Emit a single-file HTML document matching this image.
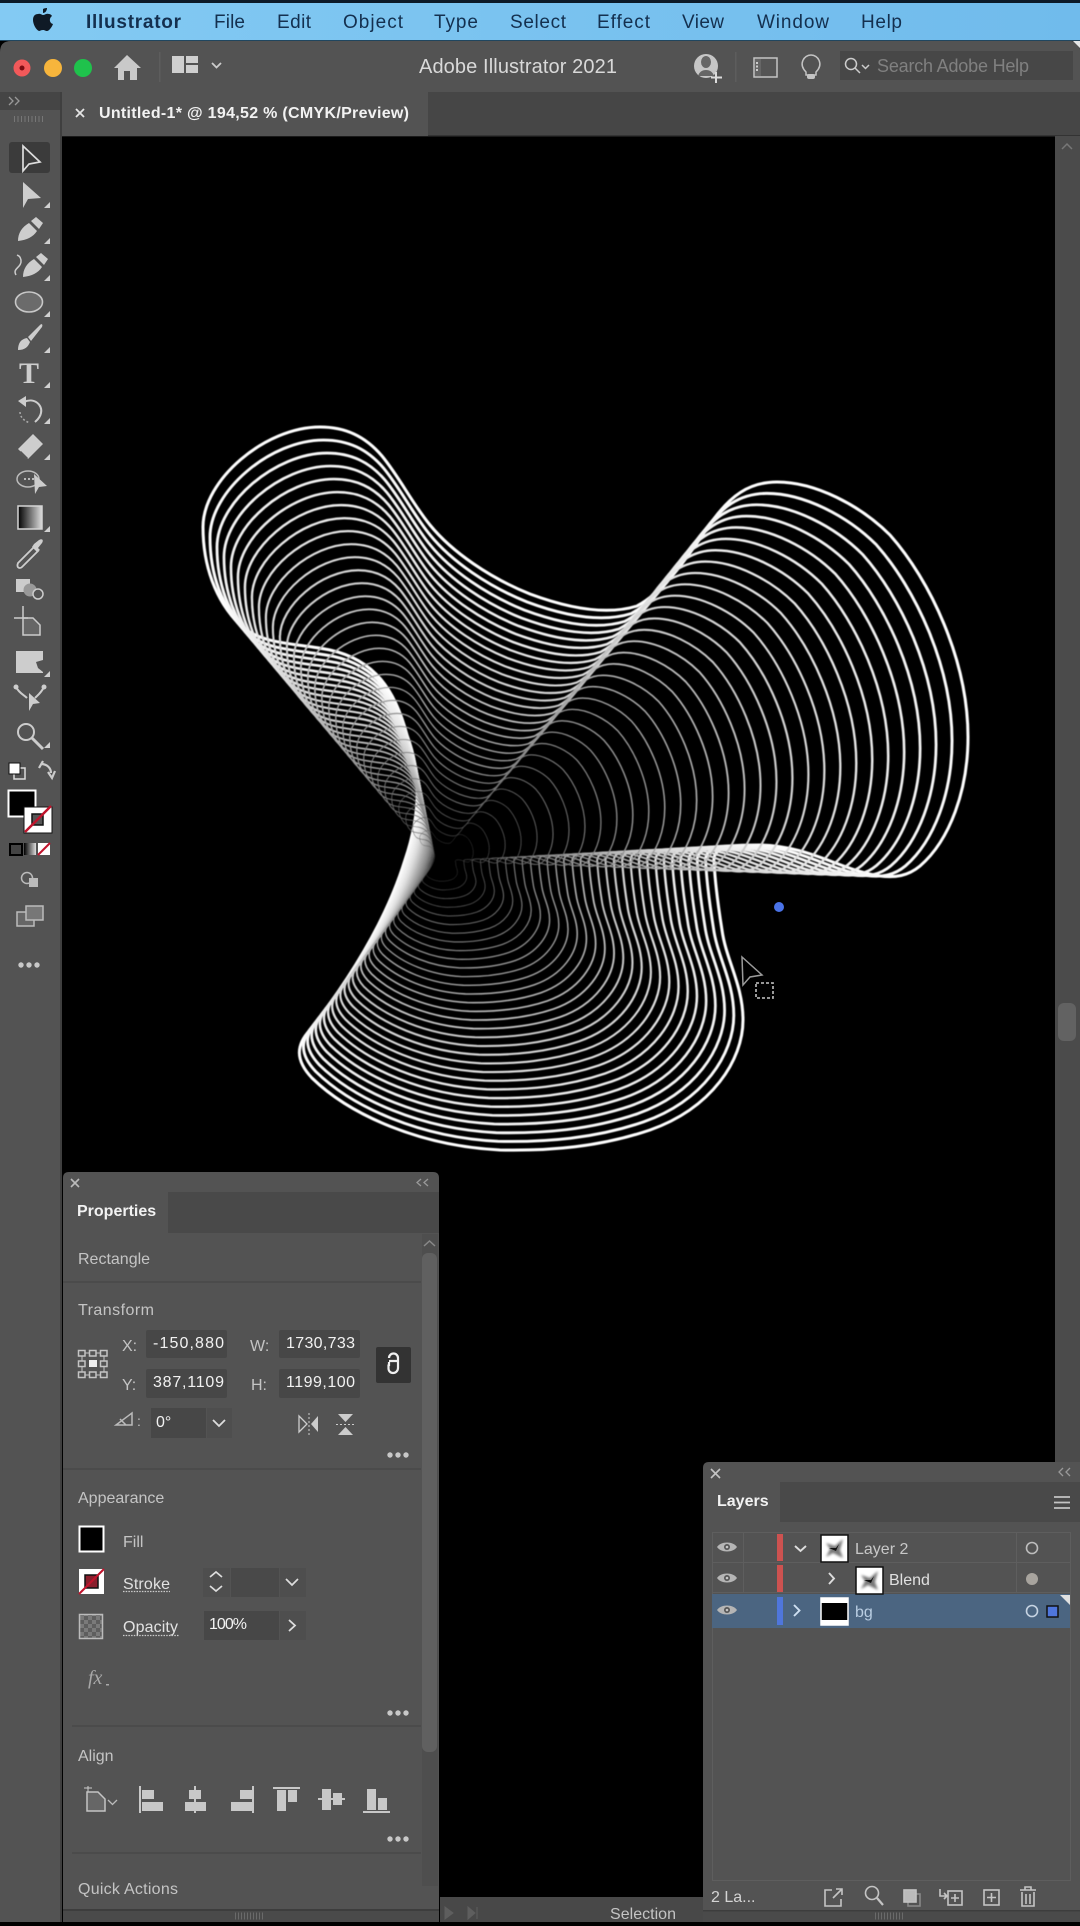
<!DOCTYPE html>
<html><head><meta charset="utf-8"><title>Adobe Illustrator 2021</title>
<style>
html,body{margin:0;padding:0;background:#000;width:1080px;height:1926px;overflow:hidden}
svg{display:block;font-family:"Liberation Sans",sans-serif}
.w{fill:#f2f2f2}
.g{fill:#c4c4c4}
.b{font-weight:bold}
</style></head><body>
<svg width="1080" height="1926" viewBox="0 0 1080 1926" xmlns="http://www.w3.org/2000/svg">
<defs>
<linearGradient id="menu" x1="0" x2="1" y1="0" y2="0"><stop offset="0" stop-color="#83caf3"/><stop offset="1" stop-color="#70bbec"/></linearGradient>
<linearGradient id="gr" x1="0" x2="1" y1="0" y2="0"><stop offset="0" stop-color="#000"/><stop offset="1" stop-color="#ddd"/></linearGradient>
<filter id="soft" x="-5%" y="-5%" width="110%" height="110%"><feGaussianBlur stdDeviation="0.4"/></filter>
<filter id="bl" x="-20%" y="-20%" width="140%" height="140%"><feGaussianBlur stdDeviation="1.3"/></filter>
<pattern id="chk" width="8" height="8" patternUnits="userSpaceOnUse"><rect width="8" height="8" fill="#5e5e5e"/><rect width="4" height="4" fill="#7a7a7a"/><rect x="4" y="4" width="4" height="4" fill="#7a7a7a"/></pattern>
<path id="tri" d="M0 0H-6L0-6Z" fill="#d0d0d0"/>
<g id="dots" fill="#c8c8c8"><circle cx="0" cy="0" r="2.700"/><circle cx="8" cy="0" r="2.700"/><circle cx="16" cy="0" r="2.700"/></g>
<g id="eye"><path d="M-10 0C-6-6 6-6 10 0C6 6-6 6-10 0Z" fill="#b5b5b5"/><circle r="3" fill="#555"/><circle r="1.300" fill="#c5c5c5"/></g>
<g id="thumb"><rect x="0" y="0" width="27" height="27" fill="#fff" stroke="#111" stroke-width="1.500"/><path d="M5 8L14 11L22 4L19 15L22 23L12 18L5 22L9 14Z" fill="#777" filter="url(#bl)"/><path d="M8 13L15 13L18 9L15 16Z" fill="#111"/></g>
<path id="b" transform="translate(-436 -861)" fill="none" stroke-linejoin="round" d="M320 427C345 427 365 436 382 456C400 478 412 503 430 525C452 552 490 578 530 594C565 607 605 616 637 606C668 590 695 545 713 520C730 497 748 482 777 482C815 482 860 505 890 535C930 580 968 660 968 737C968 790 950 840 920 866C908 876 895 878 880 876C840 870 810 846 760 845C735 845 712 845 714 862C715 880 718 905 722 930C726 960 743 985 743 1020C743 1060 712 1108 650 1130C600 1147 550 1151 500 1150C420 1146 350 1115 312 1078C295 1060 296 1045 310 1030C345 985 385 925 405 860C422 810 420 770 407 735C395 690 375 660 330 650C295 643 262 645 240 625C215 600 203 565 203 527C203 480 265 427 320 427Z"/>
</defs>

<!-- base -->
<rect width="1080" height="1926" fill="#000"/>
<rect width="1080" height="3" fill="#0c1a28"/>
<rect y="3" width="1080" height="37" fill="url(#menu)"/>
<rect y="40" width="1080" height="1" fill="#20465f"/>

<!-- menu -->
<path d="M43 9C45 8 47 8 47 8C47 11 45 13 43 13C43 11 43 10 43 9ZM38 14C40 13 42 15 43 15C45 15 46 13 49 14C51 14 52 16 52 16C49 18 49 23 53 24C52 27 49 31 47 31C45 31 45 30 43 30C41 30 40 31 39 31C36 30 33 24 33 20C33 16 35 14 38 14Z" fill="#0f1a26"/>
<g fill="#14304f" font-size="19">
<text x="86" y="28" class="b" textLength="95">Illustrator</text>
<text x="214" y="28" textLength="31">File</text>
<text x="277" y="28" textLength="34">Edit</text>
<text x="343" y="28" textLength="60">Object</text>
<text x="434" y="28" textLength="44">Type</text>
<text x="510" y="28" textLength="56">Select</text>
<text x="597" y="28" textLength="53">Effect</text>
<text x="682" y="28" textLength="42">View</text>
<text x="757" y="28" textLength="72">Window</text>
<text x="861" y="28" textLength="41">Help</text>
</g>

<!-- title bar -->
<path d="M0 52Q0 41 11 41H1070Q1080 41 1080 50V92H0Z" fill="#535353"/>
<circle cx="22" cy="68" r="8.500" fill="#f2595a"/><circle cx="22" cy="68" r="2.500" fill="#7a0c12"/>
<circle cx="53" cy="68" r="9" fill="#f7b53c"/>
<circle cx="83" cy="68" r="9" fill="#1fc24c"/>
<path d="M114 68L127 55L141 68H137V80H130V71H124V80H118V68Z" fill="#c9c9c9"/>
<rect x="159" y="52" width="1.500" height="30" fill="#5d5d5d"/>
<path d="M172 56h12v17h-12zM186 56h12v7h-12zM186 65h12v8h-12z" fill="#cfcfcf"/>
<path d="M212 63l4.500 4.500 4.500-4.500" fill="none" stroke="#ccc" stroke-width="1.800"/>
<text x="419" y="73" font-size="20" fill="#d9d9d9" textLength="198">Adobe Illustrator 2021</text>
<circle cx="706" cy="66" r="12" fill="#c6c6c6"/><path d="M701 62a5 6 0 0 1 10 0a5 6 0 0 1-10 0ZM698 76q2-6 8-6t8 6z" fill="#666"/>
<path d="M716 72v11M711 77.500h11" stroke="#ddd" stroke-width="2"/>
<rect x="735" y="52" width="1.500" height="30" fill="#5d5d5d"/>
<rect x="754" y="58" width="23" height="19" fill="#555" stroke="#c4c4c4" stroke-width="1.500"/><rect x="755" y="59" width="6" height="17" fill="#666"/><path d="M757 62v10" stroke="#ccc" stroke-width="2" stroke-dasharray="2 1.500"/>
<path d="M806 72C798 64 804 55 811 55C818 55 824 64 816 72V75H806Z" fill="none" stroke="#c4c4c4" stroke-width="1.500"/><rect x="807" y="74" width="8" height="5" rx="2" fill="#c4c4c4"/>
<rect x="840" y="51" width="233" height="29" fill="#474747"/>
<circle cx="851" cy="64" r="5.500" fill="none" stroke="#ccc" stroke-width="1.500"/><path d="M855 68l5 5M862 65l3.500 3.500 3.500-3.500" fill="none" stroke="#ccc" stroke-width="1.500"/>
<text x="877" y="72" font-size="18" fill="#808080" textLength="152">Search Adobe Help</text>
<path d="M1080 41l-7 0l7 7z" fill="#e6e6e6"/>

<!-- tab row -->
<rect y="92" width="1080" height="44" fill="#464646"/>
<rect y="135" x="62" width="1018" height="1.500" fill="#333"/>
<rect x="62" y="92" width="366" height="44" fill="#535353"/>
<path d="M76 109l8 8M84 109l-8 8" stroke="#e5e5e5" stroke-width="1.800"/>
<text x="99" y="118" class="b w" font-size="16" textLength="310">Untitled-1* @ 194,52 % (CMYK/Preview)</text>

<!-- right scrollbar -->
<rect x="1055" y="136" width="25" height="1326" fill="#4b4b4b"/>
<path d="M1062 149l5-5 5 5" fill="none" stroke="#777" stroke-width="1.500"/>
<rect x="1058" y="1003" width="18" height="38" rx="6" fill="#626262"/>

<!-- artwork -->
<g transform="translate(436 861)" filter="url(#soft)">
<g stroke-width="3.000">
<use href="#b" stroke="#fff" transform="scale(1)"/>
<use href="#b" stroke="#fcfcfc" transform="scale(.97)"/>
<use href="#b" stroke="#f8f8f8" transform="scale(.94)"/>
<use href="#b" stroke="#f4f4f4" transform="scale(.91)"/>
<use href="#b" stroke="#f1f1f1" transform="scale(.88)"/>
<use href="#b" stroke="#eee" transform="scale(.85)"/>
<use href="#b" stroke="#ebebeb" transform="scale(.82)"/>
<use href="#b" stroke="#e7e7e7" transform="scale(.79)"/>
<use href="#b" stroke="#e3e3e3" transform="scale(.76)"/>
<use href="#b" stroke="#dfdfdf" transform="scale(.73)"/>
<use href="#b" stroke="#dbdbdb" transform="scale(.70)"/>
</g>
<g stroke-width="3.300">
<use href="#b" stroke="#d5d5d5" transform="scale(.67)"/>
<use href="#b" stroke="#cfcfcf" transform="scale(.64)"/>
<use href="#b" stroke="#c9c9c9" transform="scale(.61)"/>
<use href="#b" stroke="#c3c3c3" transform="scale(.58)"/>
<use href="#b" stroke="#bcbcbc" transform="scale(.55)"/>
<use href="#b" stroke="#b5b5b5" transform="scale(.52)"/>
<use href="#b" stroke="#aeaeae" transform="scale(.49)"/>
<use href="#b" stroke="#a8a8a8" transform="scale(.46)"/>
<use href="#b" stroke="#a2a2a2" transform="scale(.43)"/>
<use href="#b" stroke="#9c9c9c" transform="scale(.40)"/>
</g>
<g stroke-width="3.800">
<use href="#b" stroke="#959595" transform="scale(.37)"/>
<use href="#b" stroke="#8e8e8e" transform="scale(.34)"/>
<use href="#b" stroke="#878787" transform="scale(.31)"/>
<use href="#b" stroke="#808080" transform="scale(.28)"/>
<use href="#b" stroke="#7a7a7a" transform="scale(.25)"/>
</g>
<g stroke-width="4.500">
<use href="#b" stroke="#727272" transform="scale(.22)"/>
<use href="#b" stroke="#6a6a6a" transform="scale(.19)"/>
<use href="#b" stroke="#626262" transform="scale(.16)"/>
</g>
<g stroke-width="6">
<use href="#b" stroke="#5a5a5a" transform="scale(.13)"/>
<use href="#b" stroke="#505050" transform="scale(.10)"/>
<use href="#b" stroke="#464646" transform="scale(.07)"/>
</g>
</g>
<circle cx="779" cy="907" r="5" fill="#4a73e8"/>
<path d="M742 957L762 975L750 977L743 985Z" fill="#000" stroke="#9a9a9a" stroke-width="1.500"/>
<rect x="756" y="983" width="17" height="15" fill="#000" stroke="#aaa" stroke-width="1.800" stroke-dasharray="3 2"/>

<!-- left toolbar -->
<rect y="92" width="62" height="1834" fill="#535353"/>
<rect y="92" width="60" height="18" fill="#454545"/>
<rect x="60" y="92" width="2" height="1834" fill="#3f3f3f"/>
<path d="M9 97l4 4-4 4M15 97l4 4-4 4" fill="none" stroke="#999" stroke-width="1.300"/>
<line x1="14" x2="43" y1="119" y2="119" stroke="#777" stroke-width="6" stroke-dasharray="1 2.500"/>
<rect x="9" y="142" width="41" height="31" rx="3" fill="#3b3b3b"/>
<path d="M23 146L40 162L29 164L23 171Z" fill="none" stroke="#ddd" stroke-width="1.700"/>
<g fill="#cdcdcd">
<path d="M23 182L41 198L28 199L23 208Z"/>
<path d="M18 241C18 233 22 227 29 223L37 231C33 237 27 240 18 241ZM31 221L36 217L43 223L39 229Z"/>
<path d="M23 277C23 269 27 263 34 259L42 267C38 273 32 276 23 277ZM36 257L41 253L48 259L44 265Z"/>
<path d="M16 275C12 268 22 268 21 260C20 256 19 256 17 255" fill="none" stroke="#cdcdcd" stroke-width="1.500"/>
<ellipse cx="29" cy="302" rx="13.500" ry="10" fill="#6b6b6b" stroke="#c8c8c8" stroke-width="1.600"/>
<path d="M18 350C18 343 21 339 27 338L30 342C28 347 25 350 18 350ZM28 337L40 325C42 323 43 325 42 327L31 341Z"/>
<text x="29" y="383" text-anchor="middle" font-family="'Liberation Serif',serif" font-weight="bold" font-size="30" fill="#cdcdcd">T</text>
<path d="M24 402C34 397 43 405 41 413C40 418 37 420 35 422" fill="none" stroke="#cdcdcd" stroke-width="2"/><path d="M18 401L26 396L26 407Z"/>
<path d="M20 412C20 417 24 421 30 423" fill="none" stroke="#aaa" stroke-width="1.500" stroke-dasharray="2 2"/>
<path d="M18 449L33 434L43 444L28 459Z"/><path d="M21 451L19 453L26 460L28 458" fill="#555"/>
<ellipse cx="28" cy="479" rx="11" ry="8" fill="none" stroke="#bbb" stroke-width="1.500"/>
<path d="M24 479h14" stroke="#bbb" stroke-width="2" stroke-dasharray="2 2"/>
<path d="M34 474L47 486L39 487L35 494Z"/>
<rect x="18" y="506" width="24" height="23" fill="url(#gr)" stroke="#d5d5d5" stroke-width="1.500"/>
<path d="M18 563L34 547L38 551L22 567C20 569 16 568 18 563Z" fill="none" stroke="#cdcdcd" stroke-width="1.800"/><path d="M34 544L39 540C42 538 44 540 42 543L38 548L40 550L37 552L32 547Z"/>
<rect x="16" y="579" width="14" height="13" fill="#ccc"/><circle cx="30" cy="590" r="6.500" fill="#999"/><circle cx="38" cy="594" r="5" fill="#555" stroke="#ccc" stroke-width="1.500"/>
<path d="M23 618V635H40V625L33 618Z" fill="#666" stroke="#ccc" stroke-width="1.500"/><path d="M23 606V618M14 618H28" stroke="#ccc" stroke-width="1.500"/>
<path d="M16 651H43V660L36 662L38 668L43 672V673H16Z"/>
<path d="M16 687C19 693 24 695 27 698M44 687C41 693 38 695 35 698" fill="none" stroke="#ccc" stroke-width="2"/><circle cx="16" cy="687" r="2.500"/><circle cx="44" cy="687" r="2.500"/><path d="M29 693L40 703L33 704L29 711Z"/>
<circle cx="26" cy="732" r="8" fill="none" stroke="#ccc" stroke-width="2"/><path d="M32 738L43 749" stroke="#ccc" stroke-width="3"/>
</g>
<use href="#tri" x="50" y="208"/><use href="#tri" x="50" y="244"/><use href="#tri" x="50" y="281"/><use href="#tri" x="50" y="317"/><use href="#tri" x="50" y="353"/><use href="#tri" x="50" y="388"/><use href="#tri" x="50" y="424"/><use href="#tri" x="50" y="460"/><use href="#tri" x="50" y="532"/><use href="#tri" x="50" y="677"/><use href="#tri" x="50" y="748"/>
<!-- swap/colors -->
<rect x="14" y="768" width="11" height="11" fill="none" stroke="#ddd" stroke-width="1.500"/><rect x="9" y="763" width="11" height="11" fill="#fff" stroke="#111"/>
<path d="M41 764C47 764 51 768 51 773M39 768L43 761M48 772L52 778L55 771" fill="none" stroke="#ccc" stroke-width="2.200"/>
<rect x="8.500" y="790.500" width="27" height="26" fill="#000" stroke="#fff" stroke-width="2"/>
<rect x="24" y="807" width="28" height="26" fill="#fff" stroke="#111"/><rect x="32" y="814" width="11" height="11" fill="#555" stroke="#111" stroke-width="1.500"/><path d="M25 832L51 806" stroke="#c0142c" stroke-width="2.500"/>
<rect x="10" y="844" width="12" height="11" fill="#444" stroke="#000" stroke-width="2"/><rect x="24" y="843" width="12" height="12" fill="url(#gr)"/><rect x="38" y="843" width="12" height="12" fill="#fff"/><path d="M38 855L50 843" stroke="#c0142c" stroke-width="2"/>
<circle cx="27" cy="878" r="5.500" fill="none" stroke="#bbb" stroke-width="1.500"/><rect x="29" y="878" width="9" height="9" fill="#bbb"/>
<rect x="17" y="912" width="17" height="14" fill="#666" stroke="#bbb" stroke-width="1.500"/><rect x="26" y="906" width="17" height="14" fill="#777" stroke="#bbb" stroke-width="1.500"/>
<use href="#dots" x="21" y="965"/>

<!-- status strip -->
<rect x="440" y="1897" width="263" height="25" fill="#484848"/>
<path d="M445 1907l8 6-8 6zM468 1907l7 6-7 6zM477 1907v12" fill="#5e5e5e" stroke="#5e5e5e"/>
<text x="610" y="1919" font-size="16" class="g" textLength="66">Selection</text>

<!-- Properties panel -->
<path d="M63 1178Q63 1172 69 1172H433Q439 1172 439 1178V1922H63Z" fill="#535353"/>
<rect x="63" y="1192" width="376" height="41" fill="#494949"/>
<rect x="63" y="1192" width="105" height="41" fill="#535353"/>
<path d="M71 1179l8 8M79 1179l-8 8" stroke="#bbb" stroke-width="1.600"/>
<path d="M421 1179l-4 3.500 4 3.500M428 1179l-4 3.500 4 3.500" fill="none" stroke="#999" stroke-width="1.300"/>
<text x="77" y="1216" font-size="16" class="b w">Properties</text>
<rect x="422" y="1234" width="16" height="652" fill="#4e4e4e"/>
<rect x="422" y="1253" width="15" height="499" rx="6" fill="#606060"/>
<path d="M424 1246l5.500-5 5.500 5" fill="none" stroke="#888" stroke-width="1.500"/>
<g fill="#4b4b4b"><rect x="63" y="1281" width="358" height="2"/><rect x="63" y="1468" width="358" height="2"/><rect x="72" y="1725" width="349" height="2"/><rect x="72" y="1852" width="349" height="2"/></g>
<g font-size="16" class="g">
<text x="78" y="1264">Rectangle</text>
<text x="78" y="1315" textLength="76">Transform</text>
<text x="122" y="1351">X:</text><text x="122" y="1390">Y:</text>
<text x="250" y="1351">W:</text><text x="251" y="1390">H:</text>
<text x="78" y="1503">Appearance</text>
<text x="123" y="1547">Fill</text>
<text x="78" y="1761" class="g">Align</text>
<text x="78" y="1894" textLength="100">Quick Actions</text>
</g>
<!-- reference point -->
<g fill="none" stroke="#c4c4c4" stroke-width="1.500">
<rect x="78.500" y="1350.500" width="6.500" height="5.500"/><rect x="89.500" y="1350.500" width="6.500" height="5.500"/><rect x="100.500" y="1350.500" width="6.500" height="5.500"/>
<rect x="78.500" y="1361" width="6.500" height="5.500"/><rect x="100.500" y="1361" width="6.500" height="5.500"/>
<rect x="78.500" y="1372" width="6.500" height="5.500"/><rect x="89.500" y="1372" width="6.500" height="5.500"/><rect x="100.500" y="1372" width="6.500" height="5.500"/>
<path d="M85 1353h4.500M96 1353h4.500M85 1375h4.500M96 1375h4.500M82 1356v5M82 1366.500v5.500M104 1356v5M104 1366.500v5.500" stroke-width="1"/>
</g><rect x="89" y="1360" width="8" height="7" fill="#eee"/>
<g fill="#474747">
<rect x="146" y="1330" width="81" height="28" rx="2"/><rect x="146" y="1369" width="81" height="29" rx="2"/>
<rect x="279" y="1330" width="81" height="28" rx="2"/><rect x="279" y="1369" width="81" height="29" rx="2"/>
<rect x="151" y="1408" width="55" height="30"/>
</g>
<g font-size="16" class="w">
<text x="153" y="1348" textLength="71">-150,880</text>
<text x="153" y="1387" textLength="71">387,1109</text>
<text x="286" y="1348" textLength="69">1730,733</text>
<text x="286" y="1387" textLength="69">1199,100</text>
<text x="156" y="1427">0°</text>
</g>
<rect x="207" y="1408" width="25" height="30" fill="#4e4e4e"/>
<path d="M213 1420l6 6 6-6" fill="none" stroke="#ddd" stroke-width="1.800"/>
<rect x="376" y="1347" width="35" height="36" rx="2" fill="#333"/>
<path d="M389 1358a4.500 4.500 0 0 1 9 0v10a5 5 0 0 1-5 5a4.500 4.500 0 0 1-4.500-4.500v-4M389 1361h9M389 1366v-4" fill="none" stroke="#f0f0f0" stroke-width="2.200"/>
<path d="M116 1425L132 1413V1425ZM120 1419L126 1425" fill="none" stroke="#bbb" stroke-width="1.500"/>
<text x="137" y="1426" font-size="14" class="g">:</text>
<path d="M299 1416v16l8-8z" fill="none" stroke="#ccc" stroke-width="1.300"/><path d="M318 1416v16l-7-8z" fill="#ccc"/><path d="M309 1413v24" stroke="#ccc" stroke-dasharray="2 2"/>
<path d="M338 1414h15l-7.500 8zM338 1435h15l-7.500-8z" fill="#ccc"/><path d="M336 1424.500h19" stroke="#ccc" stroke-dasharray="2 2"/>
<use href="#dots" x="390" y="1455"/>
<!-- appearance -->
<rect x="79.500" y="1526.500" width="24" height="25" fill="#000" stroke="#fff" stroke-width="2"/>
<rect x="79" y="1569" width="25" height="25" fill="#fff"/><rect x="85" y="1575" width="13" height="13" fill="#8a1e2c" stroke="#111" stroke-width="1.500"/><path d="M79 1594L104 1569" stroke="#c0142c" stroke-width="2"/>
<rect x="79.500" y="1614.500" width="23" height="24" fill="url(#chk)" stroke="#bbb" stroke-width="1.500"/>
<g font-size="16" fill="#e2e2e2">
<text x="123" y="1589" textLength="47">Stroke</text>
<text x="123" y="1632" textLength="55">Opacity</text>
</g>
<path d="M123 1591.500h47M123 1635.500h56" stroke="#ccc" stroke-dasharray="1.500 1.200" stroke-width="1.200"/>
<rect x="203" y="1568" width="27" height="29" fill="#4e4e4e"/><rect x="231" y="1568" width="48" height="29" fill="#494949"/><rect x="280" y="1568" width="26" height="29" fill="#4e4e4e"/>
<path d="M210 1577l6-5 6 5M210 1586l6 5 6-5M286 1579l6 6 6-6" fill="none" stroke="#ddd" stroke-width="1.700"/>
<rect x="204" y="1611" width="75" height="29" fill="#474747"/><rect x="280" y="1611" width="26" height="29" fill="#4e4e4e"/>
<text x="209" y="1629" font-size="16" class="w" textLength="38">100%</text>
<path d="M289 1620l6 5.500-6 5.500" fill="none" stroke="#ddd" stroke-width="1.800"/>
<text x="88" y="1684" font-size="20" font-family="'Liberation Serif',serif" font-style="italic" fill="#a8a8a8">fx</text><rect x="106" y="1684" width="3" height="1.500" fill="#aaa"/>
<use href="#dots" x="390" y="1713"/>
<!-- align -->
<g fill="#c8c8c8">
<path d="M84 1788h8M88 1786v7" stroke="#ccc"/><path d="M87 1792H98L105 1799V1811H87Z" fill="#666" stroke="#c4c4c4" stroke-width="1.500"/>
<path d="M108 1800l4.500 4.500 4.500-4.500" fill="none" stroke="#bbb" stroke-width="1.300"/>
<rect x="139" y="1786" width="2" height="27"/><rect x="142" y="1790" width="12" height="9"/><rect x="142" y="1802" width="21" height="9"/>
<rect x="194" y="1786" width="2" height="27"/><rect x="189" y="1790" width="12" height="9"/><rect x="185" y="1802" width="21" height="9"/>
<rect x="252" y="1786" width="2" height="27"/><rect x="240" y="1790" width="12" height="9"/><rect x="231" y="1802" width="21" height="9"/>
<rect x="273" y="1787" width="27" height="2"/><rect x="277" y="1790" width="9" height="21"/><rect x="288" y="1790" width="9" height="12"/>
<rect x="318" y="1798" width="27" height="2"/><rect x="322" y="1789" width="9" height="21"/><rect x="333" y="1793" width="9" height="12"/>
<rect x="363" y="1811" width="27" height="2"/><rect x="367" y="1789" width="9" height="21"/><rect x="378" y="1798" width="9" height="12"/>
</g>
<use href="#dots" x="390" y="1839"/>
<rect x="63" y="1909" width="376" height="2" fill="#3d3d3d"/>
<rect x="63" y="1911" width="376" height="11" fill="#4a4a4a"/>
<line x1="235" x2="264" y1="1916" y2="1916" stroke="#6a6a6a" stroke-width="7" stroke-dasharray="1 2"/>

<!-- Layers panel -->
<path d="M703 1468Q703 1462 709 1462H1080V1922H703Z" fill="#535353"/>
<rect x="703" y="1482" width="377" height="40" fill="#494949"/>
<rect x="703" y="1482" width="77" height="40" fill="#535353"/>
<path d="M711 1469l9 9M720 1469l-9 9" stroke="#c4c4c4" stroke-width="1.600"/>
<path d="M1063 1468l-4 4 4 4M1070 1468l-4 4 4 4" fill="none" stroke="#999" stroke-width="1.300"/>
<text x="717" y="1506" font-size="16" class="b w">Layers</text>
<path d="M1054 1497h16M1054 1502.500h16M1054 1508h16" stroke="#c4c4c4" stroke-width="1.800"/>
<rect x="712.500" y="1532.500" width="358" height="348" fill="none" stroke="#5e5e5e"/>
<g fill="#5e5e5e"><rect x="712" y="1562" width="358" height="1"/><rect x="712" y="1592" width="358" height="1"/></g>
<g fill="#5e5e5e"><rect x="743" y="1533" width="1" height="60"/><rect x="1016" y="1533" width="1" height="60"/></g>
<rect x="712" y="1594" width="358" height="34" fill="#4b6581"/>
<use href="#eye" x="727" y="1547"/><use href="#eye" x="727" y="1578"/><use href="#eye" x="727" y="1610"/>
<rect x="777" y="1534" width="6" height="27" fill="#cd5250"/><rect x="777" y="1565" width="6" height="27" fill="#cd5250"/><rect x="777" y="1597" width="6" height="28" fill="#4f76dc"/>
<path d="M795 1546l5.500 5 5.500-5M829 1573l5 5.500-5 5.500" fill="none" stroke="#ddd" stroke-width="1.900"/>
<path d="M794 1605l5.500 5.500-5.500 5.500" fill="none" stroke="#cfe0f2" stroke-width="1.900"/>
<use href="#thumb" x="821" y="1535"/><use href="#thumb" x="856" y="1567"/>
<rect x="821" y="1598" width="27" height="27" fill="#000" stroke="#fff" stroke-width="1.500"/><rect x="821" y="1598" width="27" height="5" fill="#fff"/><rect x="821" y="1620" width="27" height="5" fill="#fff"/>
<text x="855" y="1554" font-size="16" fill="#c8c8c8">Layer 2</text>
<text x="889" y="1585" font-size="16" fill="#e0e0e0">Blend</text>
<text x="855" y="1617" font-size="16" fill="#b9cde2">bg</text>
<circle cx="1032" cy="1548" r="5.500" fill="none" stroke="#bdbdbd" stroke-width="1.600"/>
<circle cx="1032" cy="1579" r="6" fill="#a8a49e"/>
<circle cx="1032" cy="1611" r="5.500" fill="none" stroke="#c6d3e2" stroke-width="1.600"/>
<rect x="1047" y="1606" width="11" height="11" fill="#4f76dc" stroke="#111" stroke-width="1.500"/>
<path d="M1060 1595h10v10z" fill="#e0e0e0"/>
<!-- footer -->
<text x="711" y="1902" font-size="16" fill="#d4d4d4">2 La...</text>
<g fill="none" stroke="#c4c4c4" stroke-width="1.600">
<path d="M832 1890h-7v16h16v-7M833 1898l9-9M836 1889h6v6"/>
<circle cx="872" cy="1893" r="6.500"/><path d="M877 1898l6 7" stroke-width="2.200"/>
<rect x="908" y="1894" width="12" height="12" stroke="#888"/><rect x="904" y="1890" width="12" height="12"/>
<path d="M940 1889v7h6M944 1893l3 3-3 3"/><rect x="948" y="1891" width="14" height="14"/><path d="M955 1894v8M951 1898h8"/>
<rect x="984" y="1890" width="15" height="15"/><path d="M991.500 1893v9M987 1897.500h9"/>
<path d="M1020 1890h16M1025 1890v-3h6v3M1022 1892v14h12v-14M1026 1894v10M1030 1894v10"/>
</g>
<rect x="904.500" y="1890.500" width="11" height="11" fill="#bbb"/>
<rect x="703" y="1910" width="377" height="1.500" fill="#3d3d3d"/>
<rect x="703" y="1911.500" width="377" height="10.500" fill="#4a4a4a"/>
<line x1="875" x2="905" y1="1916" y2="1916" stroke="#6a6a6a" stroke-width="7" stroke-dasharray="1 2"/>
<rect y="1922" width="1080" height="4" fill="#000"/>
</svg>
</body></html>
